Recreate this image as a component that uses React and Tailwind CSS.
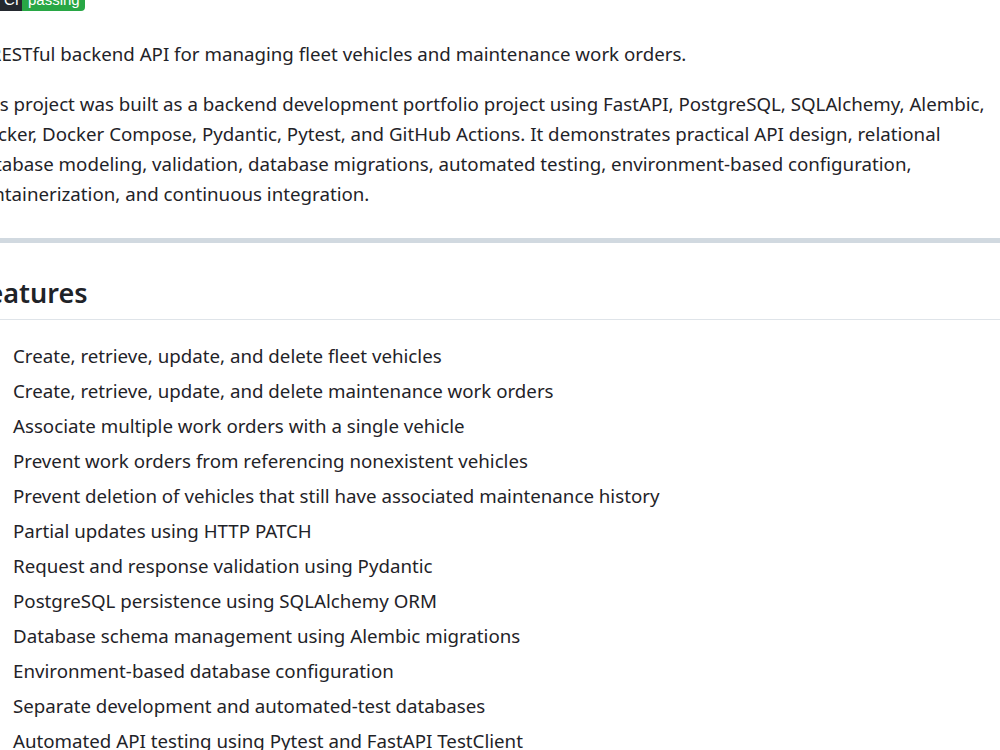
const items = [
  "Create, retrieve, update, and delete fleet vehicles",
  "Create, retrieve, update, and delete maintenance work orders",
  "Associate multiple work orders with a single vehicle",
  "Prevent work orders from referencing nonexistent vehicles",
  "Prevent deletion of vehicles that still have associated maintenance history",
  "Partial updates using HTTP PATCH",
  "Request and response validation using Pydantic",
  "PostgreSQL persistence using SQLAlchemy ORM",
  "Database schema management using Alembic migrations",
  "Environment-based database configuration",
  "Separate development and automated-test databases",
  "Automated API testing using Pytest and FastAPI TestClient",
];

export default function App() {
  return (
    <div className="h-[750px] w-[1000px] overflow-hidden bg-white text-[#1f2328] font-['Noto_Sans',sans-serif] text-[18.72px]">
      <div className="ml-[-27px] w-[1040px] mt-[-9px]">
        <div className="flex h-[20px] w-[112px] overflow-hidden rounded-[4px] font-['Liberation_Sans',sans-serif] text-[15px] leading-[18px]">
          <span className="w-[49px] bg-[#24292f] pl-[31px] text-white">CI</span>
          <span className="flex-1 bg-[#28a745] pl-[6px] text-white">passing</span>
        </div>
        <p className="mt-[28px] leading-[30px]">A RESTful backend API for managing fleet vehicles and maintenance work orders.</p>
        <p className="mt-[20px] leading-[30px]">This project was built as a backend development portfolio project using FastAPI, PostgreSQL, SQLAlchemy, Alembic, Docker, Docker Compose, Pydantic, Pytest, and GitHub Actions. It demonstrates practical API design, relational database modeling, validation, database migrations, automated testing, environment-based configuration, containerization, and continuous integration.</p>
        <div className="mt-[29px] h-[5px] bg-[#d1d9e0]" />
        <h2 className="mt-[30px] border-b border-[#d1d9e0b3] pb-[6px] text-[27px] font-semibold leading-[40px]">Features</h2>
        <ul className="mt-[21px]">
          {items.map((t) => (
            <li key={t} className="pl-[40px] leading-[30px] mb-[5px]">{t}</li>
          ))}
        </ul>
      </div>
    </div>
  );
}
